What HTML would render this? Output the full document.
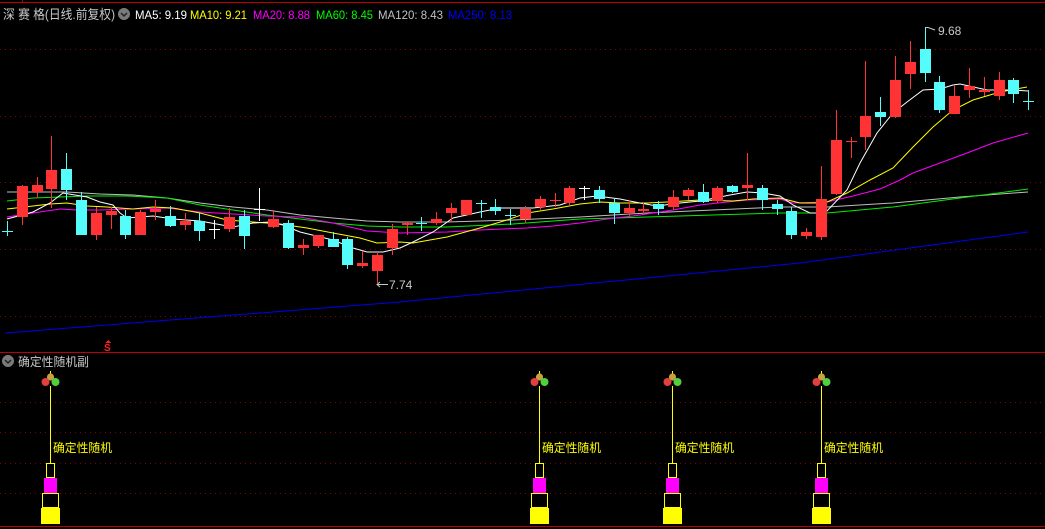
<!DOCTYPE html>
<html><head><meta charset="utf-8">
<style>
html,body{margin:0;padding:0;background:#000;width:1045px;height:529px;overflow:hidden}
svg{display:block}
text{font-family:"Liberation Sans","Noto Sans CJK SC",sans-serif}
</style></head><body>
<svg width="1045" height="529" viewBox="0 0 1045 529" xmlns="http://www.w3.org/2000/svg" shape-rendering="crispEdges">
<rect width="1045" height="529" fill="#000"/>
<rect x="0" y="2" width="1045" height="1" fill="#c00000"/>
<rect x="22" y="0" width="1" height="3" fill="#c00000"/>
<rect x="0" y="352" width="1045" height="1" fill="#c00000"/>
<rect x="0" y="526" width="1045" height="1" fill="#c00000"/>
<g stroke="#8a0000" stroke-width="1" stroke-dasharray="1,4">
<line x1="0" y1="49.5" x2="1045" y2="49.5"/>
<line x1="0" y1="116.5" x2="1045" y2="116.5"/>
<line x1="0" y1="182.5" x2="1045" y2="182.5"/>
<line x1="0" y1="249.5" x2="1045" y2="249.5"/>
<line x1="0" y1="316.5" x2="1045" y2="316.5"/>
<line x1="0" y1="402.5" x2="1045" y2="402.5"/>
<line x1="0" y1="432.5" x2="1045" y2="432.5"/>
<line x1="0" y1="463.5" x2="1045" y2="463.5"/>
<line x1="0" y1="493.5" x2="1045" y2="493.5"/>
</g>
<text x="3" y="19" font-size="13" fill="#c8c8c8" textLength="112" lengthAdjust="spacingAndGlyphs">深 赛 格(日线.前复权)</text>
<circle cx="124" cy="14" r="6" fill="#7a7a7a"/>
<path d="M121 13 L124 16 L127 13" stroke="#222" stroke-width="1.5" fill="none" shape-rendering="auto"/>
<text x="135" y="19" font-size="12" fill="#ffffff" textLength="52" lengthAdjust="spacingAndGlyphs">MA5: 9.19</text>
<text x="190" y="19" font-size="12" fill="#ffff00" textLength="57" lengthAdjust="spacingAndGlyphs">MA10: 9.21</text>
<text x="253" y="19" font-size="12" fill="#ff00ff" textLength="57" lengthAdjust="spacingAndGlyphs">MA20: 8.88</text>
<text x="316" y="19" font-size="12" fill="#00ff00" textLength="57" lengthAdjust="spacingAndGlyphs">MA60: 8.45</text>
<text x="378" y="19" font-size="12" fill="#c0c0c0" textLength="65" lengthAdjust="spacingAndGlyphs">MA120: 8.43</text>
<text x="448" y="19" font-size="12" fill="#0000ff" textLength="64" lengthAdjust="spacingAndGlyphs">MA250: 8.13</text>

<g fill="none" stroke-width="1" shape-rendering="auto">
<polyline stroke="#0000ee" points="5,333 400,302 800,263 1028,232"/>
<polyline stroke="#bfbfbf" points="7,192 67,192 100,194 133,195 167,198 200,203 233,207 267,210 300,215 333,218 367,221 400,222 447,222 513,220 580,217 647,213 713,210 780,207 827,207 893,203 960,197 1028,192"/>
<polyline stroke="#00ee00" points="7,201 33,198 60,197 87,196 127,196 167,198 200,205 233,210 267,215 300,219 333,223 367,226 400,227 447,227 513,224 580,219 647,217 713,215 780,213 827,213 893,207 960,198 1028,189"/>
<polyline stroke="#ff00ff" points="7,217 33,213 60,209 77,210 100,210 133,209 167,208 200,212 233,214 267,216 300,217 333,223 367,231 400,233 447,232 480,230 527,228 553,226 580,223 607,219 633,216 653,213 673,210 700,205 727,202 747,200 780,199 793,203 827,202 853,196 880,189 900,180 913,173 940,163 967,153 993,143 1028,133"/>
<polyline stroke="#ffff00" points="7,209 33,206 50,204 67,203 87,206 107,207 133,209 153,207 173,208 200,213 227,220 253,222 280,224 307,228 333,233 360,238 377,243 400,242 413,243 447,237 480,228 507,220 527,213 553,209 580,204 600,202 620,203 647,203 667,202 700,200 733,201 753,199 780,198 800,203 825,203 847,193 870,180 893,168 913,147 933,127 953,110 973,100 1000,92 1027,87"/>
<polyline stroke="#ffffff" points="7,219 33,212 50,203 63,193 87,197 100,202 113,205 120,213 127,218 153,216 173,219 200,221 233,227 253,223 270,222 283,225 300,232 333,240 353,248 367,252 383,252 400,248 413,242 433,232 453,218 480,212 500,208 533,208 560,205 580,198 597,196 620,199 640,203 657,206 680,203 700,201 730,195 747,192 763,193 780,196 793,205 810,213 825,213 847,190 860,163 877,133 893,113 907,102 923,90 940,89 953,85 960,84 987,90 1013,90 1028,91"/>
</g>

<g fill="#ff3333">
<rect x="22" y="185" width="1" height="40"/><rect x="17" y="186" width="11" height="31"/>
<rect x="37" y="177" width="1" height="21"/><rect x="32" y="185" width="11" height="7"/>
<rect x="51" y="136" width="1" height="72"/><rect x="46" y="170" width="11" height="19"/>
<rect x="96" y="207" width="1" height="33"/><rect x="91" y="213" width="11" height="22"/>
<rect x="111" y="207" width="1" height="22"/><rect x="106" y="211" width="11" height="4"/>
<rect x="140" y="210" width="1" height="25"/><rect x="135" y="212" width="11" height="23"/>
<rect x="155" y="200" width="1" height="20"/><rect x="150" y="209" width="11" height="3"/>
<rect x="185" y="213" width="1" height="17"/><rect x="180" y="221" width="11" height="4"/>
<rect x="229" y="208" width="1" height="24"/><rect x="224" y="217" width="11" height="12"/>
<rect x="273" y="210" width="1" height="18"/><rect x="268" y="219" width="11" height="8"/>
<rect x="303" y="239" width="1" height="16"/><rect x="298" y="245" width="11" height="3"/>
<rect x="318" y="235" width="1" height="13"/><rect x="313" y="235" width="11" height="11"/>
<rect x="362" y="251" width="1" height="17"/><rect x="357" y="263" width="11" height="3"/>
<rect x="377" y="252" width="1" height="31"/><rect x="372" y="255" width="11" height="16"/>
<rect x="392" y="224" width="1" height="31"/><rect x="387" y="229" width="11" height="19"/>
<rect x="407" y="222" width="1" height="13"/><rect x="402" y="223" width="11" height="2"/>
<rect x="436" y="212" width="1" height="13"/><rect x="431" y="219" width="11" height="4"/>
<rect x="451" y="203" width="1" height="19"/><rect x="446" y="208" width="11" height="5"/>
<rect x="466" y="200" width="1" height="15"/><rect x="461" y="200" width="11" height="15"/>
<rect x="525" y="206" width="1" height="17"/><rect x="520" y="209" width="11" height="10"/>
<rect x="540" y="196" width="1" height="14"/><rect x="535" y="199" width="11" height="8"/>
<rect x="555" y="193" width="1" height="14"/><rect x="550" y="200" width="11" height="1"/>
<rect x="569" y="186" width="1" height="19"/><rect x="564" y="188" width="11" height="15"/>
<rect x="629" y="200" width="1" height="16"/><rect x="624" y="208" width="11" height="5"/>
<rect x="643" y="203" width="1" height="11"/><rect x="638" y="209" width="11" height="2"/>
<rect x="673" y="190" width="1" height="20"/><rect x="668" y="197" width="11" height="10"/>
<rect x="688" y="188" width="1" height="12"/><rect x="683" y="190" width="11" height="6"/>
<rect x="717" y="186" width="1" height="17"/><rect x="712" y="188" width="11" height="13"/>
<rect x="747" y="153" width="1" height="47"/><rect x="742" y="185" width="11" height="3"/>
<rect x="806" y="228" width="1" height="11"/><rect x="801" y="232" width="11" height="4"/>
<rect x="821" y="166" width="1" height="74"/><rect x="816" y="199" width="11" height="38"/>
<rect x="836" y="110" width="1" height="85"/><rect x="831" y="140" width="11" height="54"/>
<rect x="851" y="137" width="1" height="21"/><rect x="846" y="141" width="11" height="1"/>
<rect x="865" y="61" width="1" height="89"/><rect x="860" y="116" width="11" height="21"/>
<rect x="895" y="56" width="1" height="62"/><rect x="890" y="80" width="11" height="37"/>
<rect x="910" y="41" width="1" height="48"/><rect x="905" y="62" width="11" height="12"/>
<rect x="954" y="85" width="1" height="29"/><rect x="949" y="96" width="11" height="18"/>
<rect x="969" y="68" width="1" height="30"/><rect x="964" y="86" width="11" height="4"/>
<rect x="984" y="77" width="1" height="19"/><rect x="979" y="90" width="11" height="2"/>
<rect x="999" y="72" width="1" height="28"/><rect x="994" y="80" width="11" height="16"/>
</g>
<g fill="#54fcfc">
<rect x="7" y="221" width="1" height="15"/><rect x="2" y="231" width="11" height="1"/>
<rect x="66" y="153" width="1" height="47"/><rect x="61" y="169" width="11" height="21"/>
<rect x="81" y="192" width="1" height="43"/><rect x="76" y="200" width="11" height="35"/>
<rect x="125" y="210" width="1" height="29"/><rect x="120" y="216" width="11" height="19"/>
<rect x="170" y="206" width="1" height="21"/><rect x="165" y="216" width="11" height="10"/>
<rect x="199" y="213" width="1" height="28"/><rect x="194" y="221" width="11" height="10"/>
<rect x="244" y="210" width="1" height="39"/><rect x="239" y="216" width="11" height="20"/>
<rect x="288" y="220" width="1" height="29"/><rect x="283" y="223" width="11" height="25"/>
<rect x="333" y="232" width="1" height="15"/><rect x="328" y="239" width="11" height="8"/>
<rect x="347" y="237" width="1" height="32"/><rect x="342" y="239" width="11" height="26"/>
<rect x="421" y="217" width="1" height="14"/><rect x="416" y="223" width="11" height="1"/>
<rect x="481" y="200" width="1" height="18"/><rect x="476" y="203" width="11" height="1"/>
<rect x="495" y="199" width="1" height="16"/><rect x="490" y="207" width="11" height="4"/>
<rect x="510" y="209" width="1" height="16"/><rect x="505" y="215" width="11" height="1"/>
<rect x="599" y="186" width="1" height="17"/><rect x="594" y="190" width="11" height="9"/>
<rect x="614" y="198" width="1" height="26"/><rect x="609" y="203" width="11" height="10"/>
<rect x="658" y="201" width="1" height="14"/><rect x="653" y="204" width="11" height="5"/>
<rect x="703" y="184" width="1" height="19"/><rect x="698" y="192" width="11" height="10"/>
<rect x="732" y="185" width="1" height="8"/><rect x="727" y="186" width="11" height="6"/>
<rect x="762" y="185" width="1" height="25"/><rect x="757" y="188" width="11" height="12"/>
<rect x="777" y="200" width="1" height="15"/><rect x="772" y="204" width="11" height="5"/>
<rect x="791" y="207" width="1" height="32"/><rect x="786" y="211" width="11" height="24"/>
<rect x="880" y="97" width="1" height="29"/><rect x="875" y="112" width="11" height="5"/>
<rect x="925" y="27" width="1" height="55"/><rect x="920" y="49" width="11" height="24"/>
<rect x="939" y="76" width="1" height="37"/><rect x="934" y="82" width="11" height="28"/>
<rect x="1013" y="78" width="1" height="25"/><rect x="1008" y="80" width="11" height="14"/>
<rect x="1028" y="90" width="1" height="20"/><rect x="1023" y="101" width="11" height="1"/>
</g>
<g fill="#ffffff">
<rect x="214" y="220" width="1" height="19"/><rect x="209" y="229" width="11" height="1"/>
<rect x="259" y="188" width="1" height="33"/><rect x="254" y="209" width="11" height="1"/>
<rect x="584" y="186" width="1" height="14"/><rect x="579" y="188" width="11" height="1"/>
</g>

<g stroke="#c8c8c8" stroke-width="1" fill="none" shape-rendering="auto">
<line x1="377" y1="284.5" x2="388" y2="284.5"/>
<path d="M380 282 L377 284.5 L380 287"/>
<path d="M925 27.5 L928 27.5 L935 30"/>
</g>
<text x="389" y="289" font-size="12" fill="#c8c8c8">7.74</text>
<text x="938" y="35" font-size="12" fill="#c8c8c8">9.68</text>

<path d="M108 340 L111 343 L105 343 Z" fill="#ff2020"/>
<text x="104" y="351" font-size="10" font-weight="bold" fill="#ff2020">S</text>

<circle cx="8" cy="361" r="6" fill="#7a7a7a"/>
<path d="M5 360 L8 363 L11 360" stroke="#222" stroke-width="1.5" fill="none" shape-rendering="auto"/>
<text x="18" y="366" font-size="12" fill="#c8c8c8" textLength="71" lengthAdjust="spacingAndGlyphs">确定性随机副</text>

<defs>
<g id="sig">
<rect x="0" y="386" width="1" height="77" fill="#ffff00"/>
<rect x="0" y="371" width="1" height="3" fill="#ffff00"/>
<g shape-rendering="auto">
<circle cx="0.5" cy="377" r="3.6" fill="#c8a040"/>
<circle cx="-4.5" cy="382" r="4" fill="#e04040"/>
<circle cx="5.5" cy="382" r="4" fill="#50d040"/>
</g>
<text x="3" y="452" font-size="12" fill="#ffff00" textLength="59" lengthAdjust="spacingAndGlyphs">确定性随机</text>
<rect x="-3.5" y="463.5" width="8" height="14" fill="none" stroke="#ffff00"/>
<rect x="-6" y="478" width="13" height="16" fill="#ff00ff"/>
<rect x="-7.5" y="493.5" width="16" height="14" fill="none" stroke="#ffff00"/>
<rect x="-9" y="508" width="19" height="16" fill="#ffff00"/>
</g>
</defs>
<use href="#sig" x="50"/>
<use href="#sig" x="539"/>
<use href="#sig" x="672"/>
<use href="#sig" x="821"/>
</svg>
</body></html>
